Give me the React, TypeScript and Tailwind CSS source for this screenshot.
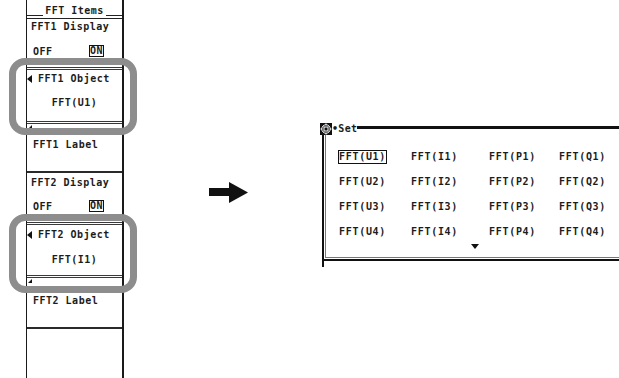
import React from "react";

const font = "font-[family-name:'DejaVu_Sans_Mono','Liberation_Mono',monospace] font-bold text-[10px] leading-[10px] text-[#1c1c1c]";
const panelText = `${font} tracking-[0.5px]`;
const gridText = `${font} tracking-[0.7px] whitespace-nowrap`;

function DoubleLine() {
  return <div className="h-[3px] shrink-0 border-y border-[#3a3a3a]" />;
}

function Line() {
  return <div className="h-[2px] shrink-0 bg-[#2a2a2a]" />;
}

function LeftMark() {
  return (
    <svg width="5" height="8" viewBox="0 0 5 8" className="shrink-0">
      <path d="M5 0 L0 4 L5 8 Z" fill="#111" />
    </svg>
  );
}

function CornerMark() {
  return (
    <svg width="4" height="4" viewBox="0 0 4 4" className="ml-px mt-px shrink-0">
      <path d="M4 0 L4 4 L0 4 Z" fill="#111" />
    </svg>
  );
}

function OnOff() {
  return (
    <div className="mt-auto mb-[10px] flex items-end justify-between pl-[6px] pr-[18px]">
      <span className={panelText}>OFF</span>
      <span className={`${panelText} border border-[#111]`}>ON</span>
    </div>
  );
}

function KnobIcon() {
  return (
    <svg width="12" height="12" viewBox="0 0 12 12" className="shrink-0">
      <rect width="12" height="12" fill="#111" />
      <circle cx="6" cy="6" r="4.2" fill="none" stroke="#fff" strokeWidth="1" />
      <rect x="4" y="4" width="4" height="4" fill="none" stroke="#fff" strokeWidth="1" />
      <path d="M6 0.5 V2 M6 10 V11.5 M0.5 6 H2 M10 6 H11.5" stroke="#fff" strokeWidth="1" />
    </svg>
  );
}

const rows = [
  ["FFT(U1)", "FFT(I1)", "FFT(P1)", "FFT(Q1)"],
  ["FFT(U2)", "FFT(I2)", "FFT(P2)", "FFT(Q2)"],
  ["FFT(U3)", "FFT(I3)", "FFT(P3)", "FFT(Q3)"],
  ["FFT(U4)", "FFT(I4)", "FFT(P4)", "FFT(Q4)"],
];

export default function App() {
  return (
    <div className="relative w-[619px] h-[378px] overflow-hidden bg-white flex items-start">
      {/* soft key menu */}
      <div className="ml-[26px] w-[98px] h-[378px] shrink-0 flex flex-col border-l border-r-2 border-[#1a1a1a]">
        <div className="h-[16px] flex items-end shrink-0">
          <div className="flex-1 border-b border-[#222]" />
          <span className={`${panelText} px-[2px]`}>FFT Items</span>
          <div className="flex-1 border-b border-[#222]" />
        </div>
        <div className="h-[3px] shrink-0 border-b border-[#222]" />

        <div className="h-[48px] shrink-0 flex flex-col pt-[3px]">
          <span className={`${panelText} pl-[4px]`}>FFT1 Display</span>
          <OnOff />
        </div>
        <DoubleLine />
        <div className="h-[51px] shrink-0 flex flex-col pt-[4px]">
          <div className="flex items-center gap-[6px]">
            <LeftMark />
            <span className={panelText}>FFT1 Object</span>
          </div>
          <div className={`${panelText} mt-[14px] text-center`}>FFT(U1)</div>
        </div>
        <DoubleLine />
        <div className="h-[47px] shrink-0 flex flex-col">
          <CornerMark />
          <span className={`${panelText} mt-[11px] pl-[6px]`}>FFT1 Label</span>
        </div>
        <Line />

        <div className="h-[49px] shrink-0 flex flex-col pt-[5px]">
          <span className={`${panelText} pl-[4px]`}>FFT2 Display</span>
          <OnOff />
        </div>
        <DoubleLine />
        <div className="h-[50px] shrink-0 flex flex-col pt-[5px]">
          <div className="flex items-center gap-[6px]">
            <LeftMark />
            <span className={panelText}>FFT2 Object</span>
          </div>
          <div className={`${panelText} mt-[15px] text-center`}>FFT(I1)</div>
        </div>
        <DoubleLine />
        <div className="h-[49px] shrink-0 flex flex-col">
          <CornerMark />
          <span className={`${panelText} mt-[13px] pl-[6px]`}>FFT2 Label</span>
        </div>
        <Line />
      </div>

      {/* arrow */}
      <svg width="39" height="21" viewBox="0 0 39 21" className="ml-[85px] mt-[182px] shrink-0">
        <rect x="0" y="6" width="21" height="8" fill="#111" />
        <path d="M20 0 L39 10.5 L20 21 Z" fill="#111" />
      </svg>

      {/* Set dialog */}
      <div className="ml-[72px] mt-[123px] w-[320px] shrink-0 flex flex-col">
        <div className="h-[12px] flex items-start">
          <KnobIcon />
          <span className={`${font} tracking-[0.3px] mt-px`}>•Set</span>
          <div className="flex-1 mt-[3px] h-[3px] bg-[#111]" />
        </div>
        <div className="ml-[2px] border-l-2 border-b-2 border-[#111]">
          <div className="ml-px mb-px border-l border-b border-[#777] pl-[13px] pt-[9px] pb-[8px]">
            <div className="grid grid-cols-[72px_78px_70px_70px] auto-rows-[25px] items-center">
              {rows.flat().map((label, i) =>
                i === 0 ? (
                  <span key={label} className="flex">
                    <span className={`${gridText} -ml-px border border-[#111] py-px`}>{label}</span>
                  </span>
                ) : (
                  <span key={label} className={gridText}>
                    {label}
                  </span>
                )
              )}
            </div>
            <svg width="8" height="5" viewBox="0 0 8 5" className="ml-[132px] block">
              <path d="M0 0 H8 L4 5 Z" fill="#111" />
            </svg>
          </div>
        </div>
        <div className="ml-[2px] w-[2px] h-[6px] bg-[#111]" />
      </div>

      {/* highlight rings */}
      <div className="absolute left-[9px] top-[58px] w-[128px] h-[77px] rounded-[16px] border-[7px] border-[#8d8d8d]" />
      <div className="absolute left-[9px] top-[214px] w-[128px] h-[79px] rounded-[16px] border-[7px] border-[#8d8d8d]" />
    </div>
  );
}
